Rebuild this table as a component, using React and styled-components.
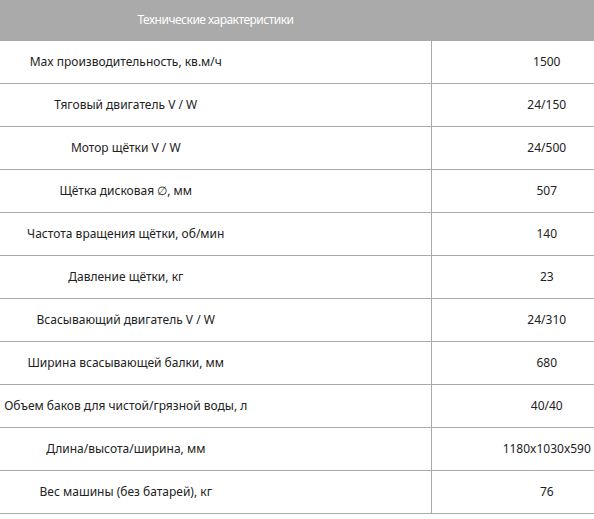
import React from "react";
import styled, { createGlobalStyle } from "styled-components";

const GlobalStyle = createGlobalStyle`
  body {
    margin: 0;
    background: #fff;
    font-family: "Noto Sans", "Open Sans", sans-serif;
  }
`;

const Table = styled.table`
  width: 594px;
  border-collapse: collapse;
  table-layout: fixed;
  font-size: 12px;
  color: #222;
`;

const HeadRow = styled.tr`
  height: 40px;
  background-color: #aaaaaa;
`;

const HeadCell = styled.th`
  padding: 0;
  font-weight: 400;
  letter-spacing: -0.5px;
  color: #fff;
  text-align: center;
  width: ${(p) => p.$width}px;
`;

const Row = styled.tr`
  height: 43px;
  border-top: 1px solid #aaa;
  border-bottom: 1px solid #aaa;
`;

const NameCell = styled.td`
  padding: 0 179px 0 0;
  text-align: center;
  border-right: 1px solid #aaa;
  white-space: nowrap;
`;

const ValueCell = styled.td`
  padding: 0 0 0 68px;
  text-align: center;
  white-space: nowrap;
`;

const specs = [
  ["Max производительность, кв.м/ч", "1500"],
  ["Тяговый двигатель V / W", "24/150"],
  ["Мотор щётки V / W", "24/500"],
  ["Щётка дисковая ∅, мм", "507"],
  ["Частота вращения щётки, об/мин", "140"],
  ["Давление щётки, кг", "23"],
  ["Всасывающий двигатель V / W", "24/310"],
  ["Ширина всасывающей балки, мм", "680"],
  ["Объем баков для чистой/грязной воды, л", "40/40"],
  ["Длина/высота/ширина, мм", "1180x1030x590"],
  ["Вес машины (без батарей), кг", "76"],
];

const App = () => {
  return (
    <>
      <GlobalStyle />
      <Table>
        <thead>
          <HeadRow>
            <HeadCell $width={431}>Технические характеристики</HeadCell>
            <HeadCell $width={163} />
          </HeadRow>
        </thead>
        <tbody>
          {specs.map(([name, value]) => (
            <Row key={name}>
              <NameCell>{name}</NameCell>
              <ValueCell>{value}</ValueCell>
            </Row>
          ))}
        </tbody>
      </Table>
    </>
  );
};

export default App;
